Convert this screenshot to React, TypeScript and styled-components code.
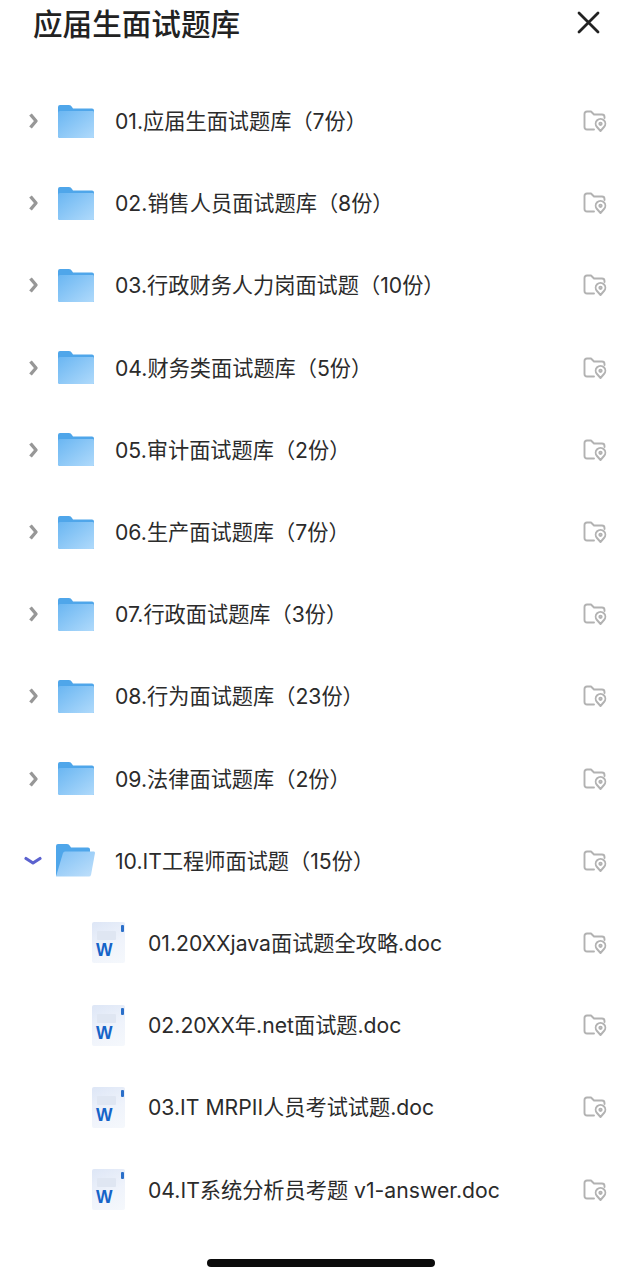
import React from "react";
import styled, { createGlobalStyle } from "styled-components";

const Global = createGlobalStyle`
  html, body { margin: 0; padding: 0; background: #fff; }
  body { font-family: "Inter", "Noto Sans CJK SC", sans-serif; }
`;

const Page = styled.div`
  position: relative;
  width: 641px;
  height: 1280px;
  overflow: hidden;
  background: #fff;
`;

const Header = styled.header`
  height: 80px;
  display: flex;
  align-items: flex-start;
  justify-content: space-between;
  padding: 0 40px 0 33px;
`;

const Title = styled.h1`
  margin: 3px 0 0;
  font-size: 29.6px;
  line-height: 40px;
  font-weight: 500;
  color: #222;
  font-family: "Noto Sans CJK SC", sans-serif;
`;

const CloseButton = styled.div`
  margin-top: 10px;
  width: 25px;
  height: 25px;
  color: #222;
`;

const List = styled.div`
  display: flex;
  flex-direction: column;
`;

const Row = styled.div<{ $child?: boolean }>`
  height: 82.2px;
  display: flex;
  align-items: center;
  padding-left: ${(p) => (p.$child ? "92px" : "24px")};
  padding-right: 34px;
`;

const Chevron = styled.div`
  width: 33.5px;
  height: 24px;
  flex: none;
  display: flex;
  align-items: center;
`;

const IconSlot = styled.div<{ $child?: boolean }>`
  flex: none;
  width: ${(p) => (p.$child ? "56px" : "57.5px")};
  display: flex;
  align-items: center;
`;

const Label = styled.span`
  flex: 1;
  font-size: 21.2px;
  line-height: 28px;
  color: #2b2b2b;
  white-space: nowrap;
`;

const Doc = styled.div`
  position: relative;
  width: 33px;
  height: 41px;
  border-radius: 2px;
  background: linear-gradient(155deg, #dde6f6 0%, #eff3fb 55%, #f5f8fc 100%);
`;

const DocLines = styled.span`
  position: absolute;
  left: 5px;
  top: 9px;
  width: 19px;
  height: 9px;
  border-radius: 1px;
  background: #dfe6f2;
`;

const DocMark = styled.span`
  position: absolute;
  top: 3px;
  right: 1px;
  width: 3px;
  height: 7px;
  border-radius: 1px;
  background: #2a6fc9;
`;

const DocLetter = styled.span`
  position: absolute;
  left: 4px;
  bottom: 4px;
  font-family: "Liberation Sans", sans-serif;
  font-size: 17.5px;
  line-height: 18px;
  font-weight: 700;
  color: #1664c8;
`;

const HomeBar = styled.div`
  position: absolute;
  left: 207px;
  top: 1259px;
  width: 228px;
  height: 8px;
  border-radius: 4px;
  background: #0b0b0b;
`;

const ChevronRight = () => (
  <svg width="12" height="18" viewBox="0 0 12 18" fill="none" style={{ marginLeft: 4 }}>
    <path d="M2.5 2.5 L8 9 L2.5 15.5" stroke="#979797" strokeWidth="3.4" strokeLinejoin="round" />
  </svg>
);

const ChevronDown = () => (
  <svg width="18" height="10" viewBox="0 0 18 10" fill="none">
    <path d="M2 2.5 L9 7 L16 2.5" stroke="#5b62cf" strokeWidth="3.2" strokeLinecap="round" strokeLinejoin="round" />
  </svg>
);

const FolderClosed = ({ id }: { id: string }) => (
  <svg width="36" height="33" viewBox="0 0 36 33">
    <defs>
      <linearGradient id={id} x1="0" y1="0" x2="1" y2="1">
        <stop offset="0" stopColor="#6ab6f2" />
        <stop offset="1" stopColor="#b0dafb" />
      </linearGradient>
    </defs>
    <path d="M0 2 Q0 0 2 0 H11 Q13 0 14 2 L15 3.5 H34 Q36 3.5 36 5.5 V32 Q36 33 35 33 H2 Q0 33 0 31 Z" fill="#4fa6ea" />
    <path d="M0 8 Q0 6 2 6 H35 Q36 6 36 8 V32 Q36 33 35 33 H2 Q0 33 0 31 Z" fill={`url(#${id})`} />
  </svg>
);

const FolderOpen = () => (
  <svg width="39" height="33" viewBox="0 0 39 33" style={{ marginLeft: -1.5 }}>
    <defs>
      <linearGradient id="fo" x1="0" y1="0" x2="1" y2="1">
        <stop offset="0" stopColor="#7fc0f5" />
        <stop offset="1" stopColor="#c0e0fb" />
      </linearGradient>
    </defs>
    <path d="M0 2 Q0 0 2 0 H11 Q13 0 14 2 L15 3.5 H32 Q34 3.5 34 5.5 V32 H1 Q0 32 0 31 Z" fill="#4fa6ea" />
    <path d="M7 9 Q7.5 7.5 9 7.5 H38 Q39 7.5 39 9 L35 31 Q34.5 32.5 33 32.5 H0 Z" fill="url(#fo)" />
  </svg>
);

const FolderPin = () => (
  <svg width="24" height="22" viewBox="0 0 24 22" fill="none" stroke="#b2b2b2" strokeWidth="1.9">
    <path d="M11 19.5 H4 Q1.5 19.5 1.5 17 V4 Q1.5 1.5 4 1.5 H8 L11 4.5 H19 Q21.5 4.5 21.5 7 V8" strokeLinecap="round" strokeLinejoin="round" />
    <path d="M17.5 21 L14 17 A4.8 4.8 0 1 1 21 17 Z" strokeLinejoin="round" />
    <circle cx="17.5" cy="13.8" r="1.2" />
  </svg>
);

const folders = [
  "01.应届生面试题库（7份）",
  "02.销售人员面试题库（8份）",
  "03.行政财务人力岗面试题（10份）",
  "04.财务类面试题库（5份）",
  "05.审计面试题库（2份）",
  "06.生产面试题库（7份）",
  "07.行政面试题库（3份）",
  "08.行为面试题库（23份）",
  "09.法律面试题库（2份）",
];

const files = [
  "01.20XXjava面试题全攻略.doc",
  "02.20XX年.net面试题.doc",
  "03.IT MRPII人员考试试题.doc",
  "04.IT系统分析员考题 v1-answer.doc",
];

export default function App() {
  return (
    <Page>
      <Global />
      <Header>
        <Title>应届生面试题库</Title>
        <CloseButton>
          <svg width="25" height="25" viewBox="0 0 25 25" fill="none" stroke="currentColor" strokeWidth="2.8" strokeLinecap="round">
            <path d="M3 3 L22 22 M22 3 L3 22" />
          </svg>
        </CloseButton>
      </Header>
      <List>
        {folders.map((name, i) => (
          <Row key={name}>
            <Chevron><ChevronRight /></Chevron>
            <IconSlot><FolderClosed id={`f${i}`} /></IconSlot>
            <Label>{name}</Label>
            <FolderPin />
          </Row>
        ))}
        <Row>
          <Chevron><ChevronDown /></Chevron>
          <IconSlot><FolderOpen /></IconSlot>
          <Label>10.IT工程师面试题（15份）</Label>
          <FolderPin />
        </Row>
        {files.map((name) => (
          <Row key={name} $child>
            <IconSlot $child>
              <Doc>
                <DocLines />
                <DocMark />
                <DocLetter>W</DocLetter>
              </Doc>
            </IconSlot>
            <Label>{name}</Label>
            <FolderPin />
          </Row>
        ))}
      </List>
      <HomeBar />
    </Page>
  );
}
